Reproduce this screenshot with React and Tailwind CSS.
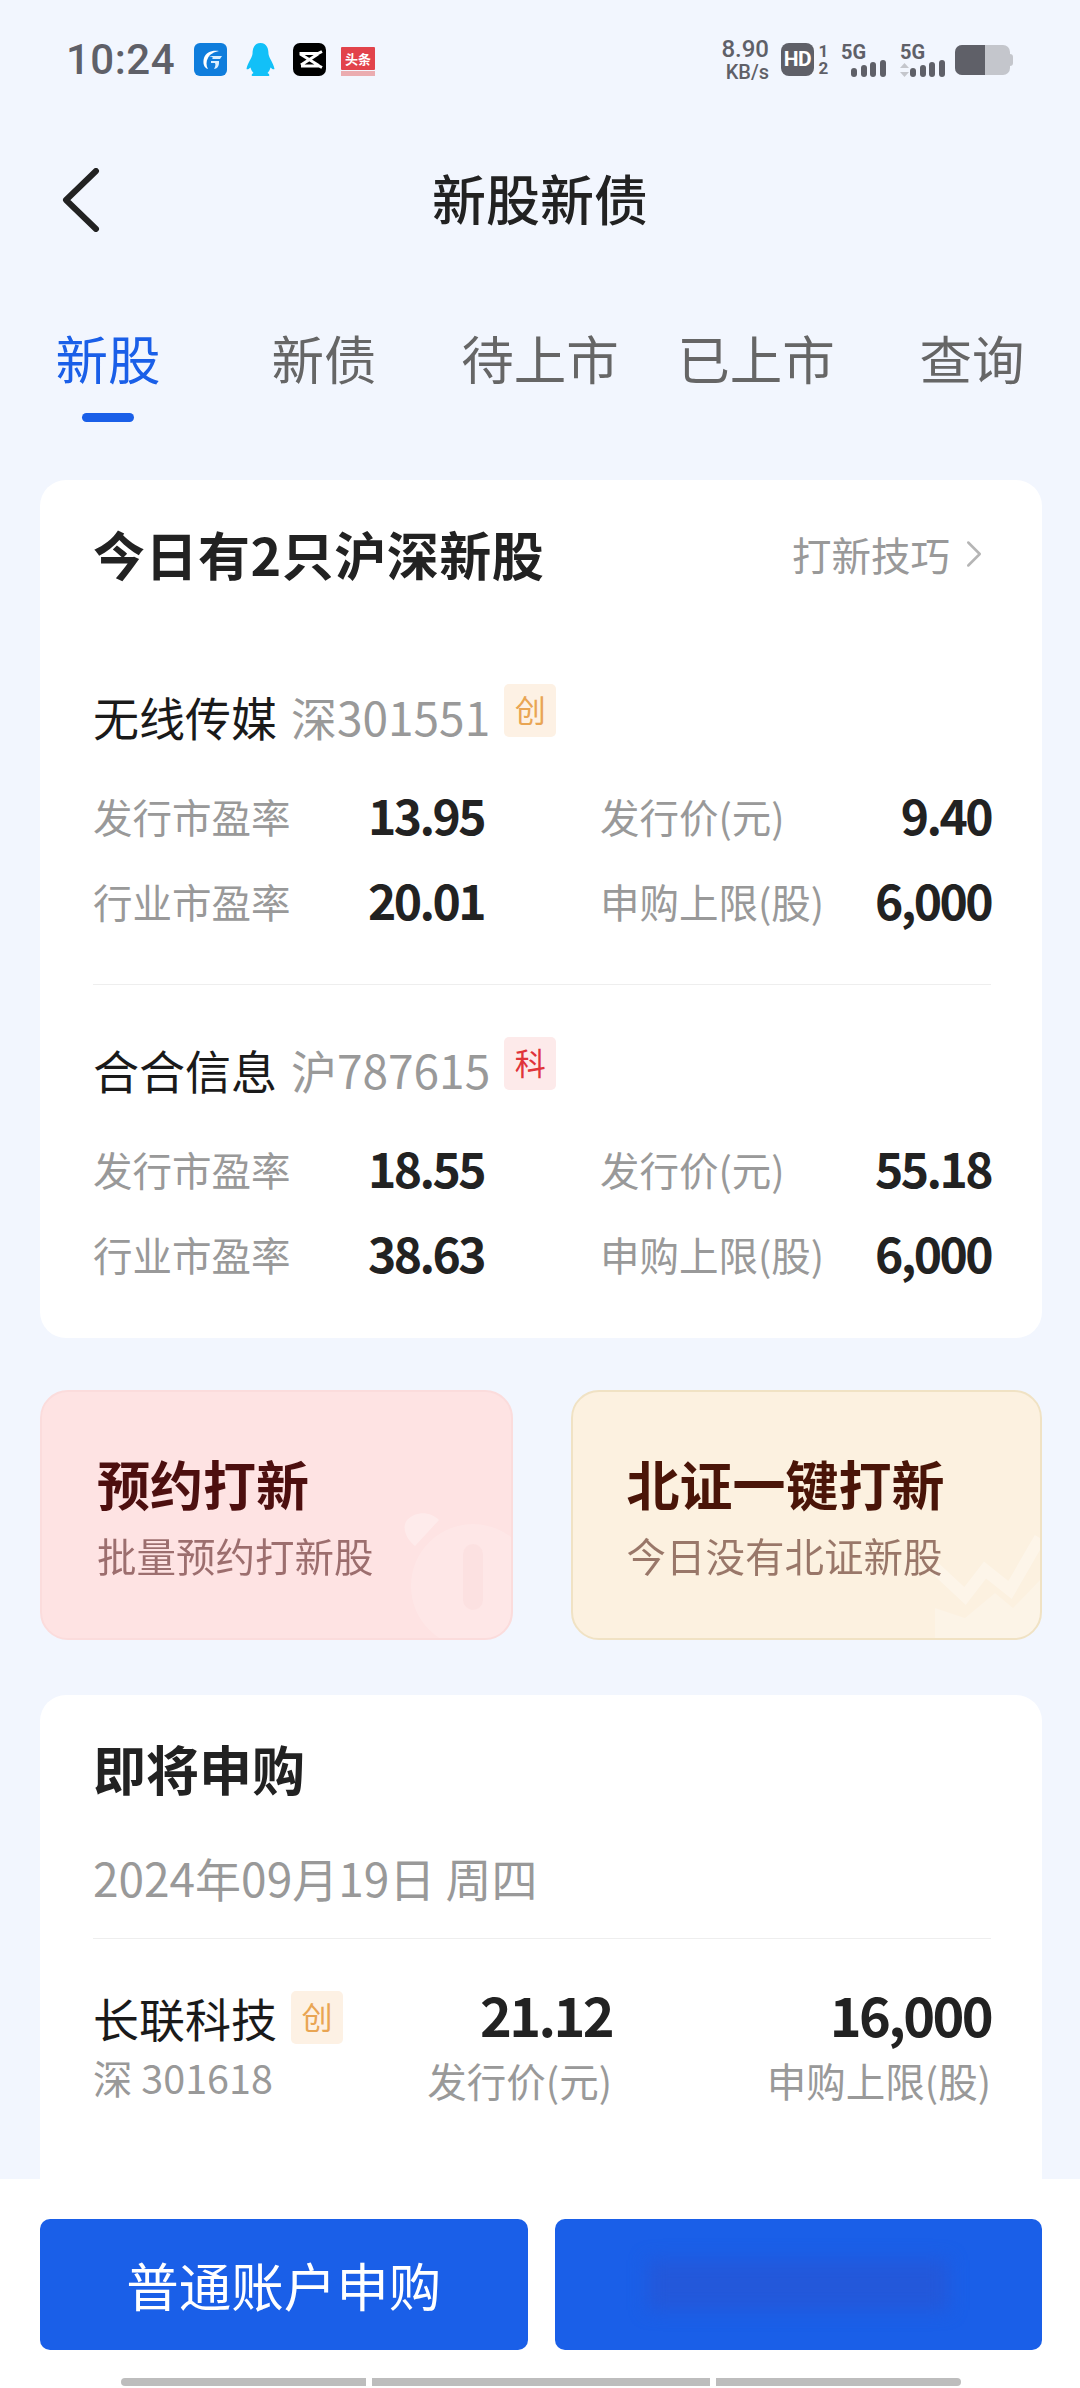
import { ChevronRight } from 'lucide-react';

const SignalBars = () => (
  <svg width="35" height="17" viewBox="0 0 35 17" fill="#5f6068">
    <rect x="0" y="8" width="6" height="9" rx="3" />
    <rect x="10" y="5" width="6" height="12" rx="3" />
    <rect x="19" y="2" width="6" height="15" rx="3" />
    <rect x="29" y="0" width="6" height="17" rx="3" />
  </svg>
);

function NetworkIcon({ arrows }) {
  return (
    <div className="relative w-[45px] h-[34px]">
      <span className="absolute left-0 top-[-2px] font-['Roboto',sans-serif] text-[20px] leading-[22px] font-bold text-[#5f6068]">5G</span>
      <div className="absolute right-0 bottom-0 flex">
        <SignalBars />
      </div>
      {arrows && (
        <svg className="absolute left-0 bottom-0" width="9" height="14" viewBox="0 0 9 14" fill="#c4c6cc">
          <path d="M4.5 0 9 5H0z" />
          <path d="M4.5 14 0 9h9z" />
        </svg>
      )}
    </div>
  );
}

function StatusBar() {
  return (
    <div className="h-[120px] flex items-center justify-between pl-[66px] pr-[67px] pb-[1px]">
      <div className="flex items-center">
        <span className="font-['Roboto',sans-serif] font-medium text-[42px] leading-[48px] text-[#5f6068] w-[128px] tracking-[0.5px]">10:24</span>
        <div className="flex items-center">
          <svg width="33" height="33" viewBox="0 0 33 33">
            <rect width="33" height="33" rx="6" fill="#0f7ddc" />
            <path d="M25 8c-7-1-13 1-15 7-1.500 5 0 10 4 11-2-3-2-8 0-11 2-4 6-6 11-7z" fill="#fff" />
            <path d="M15 13h13l-2 3h-8c1-1 2-2-3-3zM17 18h8v2c0 3-2 6-5 6 1-2 2-4 1-6h-4z" fill="#d9efff" />
          </svg>
          <svg className="ml-[19px]" width="29" height="33" viewBox="0 0 29 33" fill="#12c0f8">
            <path d="M14.500 0C8 0 6.500 6 6.500 11 6 15 1.500 20 .5 26c1 1 3-.5 4-1.500.5 2 1.500 4 3 5.500-2 1-2.500 3-1 3h16c1.500 0 1-2-1-3 1.500-1.500 2.500-3.500 3-5.500 1 1 3 2.500 4 1.500-1-6-5.500-11-6-15C22.500 6 21 0 14.500 0z" />
          </svg>
          <svg className="ml-[18px]" width="33" height="33" viewBox="0 0 33 33">
            <rect width="33" height="33" rx="7" fill="#000" />
            <path d="M29 8.500 25 10.500H8V11.500L25 22V23H8M29 24.500 25 22.500M25 11 8 22" fill="none" stroke="#fff" strokeWidth="3" />
          </svg>
          <div className="ml-[15px] w-[34px] h-[33px] flex flex-col items-center">
            <div className="w-full h-[23px] mt-[4px] bg-[#e2434b] rounded-[1px] text-[13px] leading-[23px] text-white text-center font-bold">头条</div>
            <div className="w-full h-[5px] mt-[1px] bg-[#e88d8f] opacity-70" />
          </div>
        </div>
      </div>
      <div className="flex items-center">
        <div className="flex flex-col items-end w-[54px] font-['Roboto',sans-serif] font-medium text-[#5f6068]">
          <span className="text-[24px] leading-[26px]">8.90</span>
          <span className="text-[20px] leading-[21px]">KB/s</span>
        </div>
        <div className="ml-[12px] w-[33px] h-[33px] rounded-[8px] bg-[#5f6068] text-white font-bold font-['Roboto',sans-serif] text-[21px] leading-[33px] text-center tracking-[-0.5px]">HD</div>
        <div className="ml-[3px] w-[13px] flex flex-col items-center font-['Roboto',sans-serif] font-bold text-[#5f6068] text-[17px] leading-[17px]">
          <span>1</span>
          <span>2</span>
        </div>
        <div className="ml-[11px]"><NetworkIcon /></div>
        <div className="ml-[14px]"><NetworkIcon arrows /></div>
        <div className="ml-[10px] flex items-center">
          <div className="w-[55px] h-[30px] rounded-[7px] overflow-hidden bg-[#c4c6cc] flex">
            <div className="w-[30px] bg-[#5f6068]" />
          </div>
          <div className="w-[3px] h-[12px] bg-[#c4c6cc] rounded-r-[3px]" />
        </div>
      </div>
    </div>
  );
}

function Badge({ children, red }) {
  return (
    <span className={`w-[52px] h-[53px] rounded-[5px] flex items-center justify-center pb-[4px] text-[31px] leading-none ${red ? 'bg-[#fdeaea] text-[#e0343a]' : 'bg-[#fdf1e4] text-[#e9a553]'}`}>
      {children}
    </span>
  );
}

function Stat({ label, value }) {
  return (
    <div className="flex items-center justify-between h-[56px]">
      <span className="text-[39.500px] text-[#999999]">{label}</span>
      <span className="mb-[4px] text-[48px] font-bold text-[#222222] tracking-[-2.600px]">{value}</span>
    </div>
  );
}

function Stock({ name, code, board, red, rows }) {
  return (
    <div>
      <div className="flex items-start h-[60px]">
        <span className="text-[46px] leading-[60px] text-[#1a1a1a]">{name}</span>
        <span className="ml-[14px] text-[46px] leading-[60px] text-[#999999]">{code}</span>
        <span className="ml-[14px] mt-[-2px]"><Badge red={red}>{board}</Badge></span>
      </div>
      <div className="mt-[42px] grid grid-cols-2 gap-x-[116px] gap-y-[29px]">
        {rows.map(([label, value]) => (
          <Stat key={label} label={label} value={value} />
        ))}
      </div>
    </div>
  );
}

function ActionCard({ title, sub, theme, children }) {
  return (
    <div className={`relative overflow-hidden flex-1 h-[250px] rounded-[28px] border-2 pt-[58px] ${theme}`}>
      {children}
      <div className="relative text-[53px] leading-[66px] font-bold">{title}</div>
      <div className="relative mt-[12px] text-[39.500px] leading-[54px] opacity-55">{sub}</div>
    </div>
  );
}

export default function App() {
  return (
    <div className="w-[1080px] h-[2388px] overflow-hidden flex flex-col bg-[#f2f6fe] font-['Noto_Sans_CJK_SC',sans-serif]">
      <StatusBar />

      <div className="relative h-[160px] flex items-center justify-center pb-[6px]">
        <svg className="absolute left-[61px] top-[48px]" width="40" height="64" viewBox="0 0 40 64" fill="none" stroke="#222222" strokeWidth="6" strokeLinecap="round" strokeLinejoin="round">
          <path d="M35 3 5 32l30 29" />
        </svg>
        <h1 className="text-[54px] font-medium text-[#222222]">新股新债</h1>
      </div>

      {/* tabs */}
      <div className="grid grid-cols-5 h-[200px]">
        {['新股', '新债', '待上市', '已上市', '查询'].map((tab, i) => (
          <div key={tab} className="relative h-[142px] pt-[39px] text-center">
            <span className={`text-[52.500px] leading-[76px] ${i === 0 ? 'text-[#1a5fe8]' : 'text-[#666666]'}`}>{tab}</span>
            {i === 0 && <div className="absolute left-[82px] top-[133px] w-[52px] h-[9px] rounded-full bg-[#1a5fe8]" />}
          </div>
        ))}
      </div>

      <div className="flex-1 min-h-0 overflow-hidden pl-[40px] pr-[38px]">
        <div className="bg-white rounded-[26px] pt-[38px] pb-[56px] pl-[53px] pr-[51px]">
          <div className="flex items-center justify-between h-[72px]">
            <span className="text-[52px] font-bold text-[#222222] tracking-[0.5px]">今日有2只沪深新股</span>
            <span className="flex items-center text-[39.500px] text-[#999999] -mr-[6px]">
              打新技巧
              <ChevronRight className="ml-[1px]" size={46} strokeWidth={1.300} color="#b5b5b5" />
            </span>
          </div>
          <div className="mt-[96px]">
            <Stock
              name="无线传媒"
              code="深301551"
              board="创"
              rows={[['发行市盈率', '13.95'], ['发行价(元)', '9.40'], ['行业市盈率', '20.01'], ['申购上限(股)', '6,000']]}
            />
          </div>
          <div className="h-[1px] bg-[#eeeeee] mt-[55px] mb-[54px]" />
          <Stock
            name="合合信息"
            code="沪787615"
            board="科"
            red
            rows={[['发行市盈率', '18.55'], ['发行价(元)', '55.18'], ['行业市盈率', '38.63'], ['申购上限(股)', '6,000']]}
          />
        </div>

        <div className="mt-[52px] flex gap-[58px]">
          <ActionCard title="预约打新" sub="批量预约打新股" theme="pl-[55px] bg-[#fee3e3] border-[#fbdcdc] text-[#4d0f0f]">
            <svg className="absolute right-0 bottom-0" width="110" height="130" viewBox="0 0 110 130">
              <path d="M6 12c10-10 24-8 32 0L14 38C6 32 0 20 6 12z" fill="#fff" opacity="0.3" />
              <circle cx="72" cy="78" r="62" fill="#fff" opacity="0.16" />
              <rect x="62" y="36" width="20" height="66" rx="10" fill="#f9d3d3" opacity="0.3" />
            </svg>
          </ActionCard>
          <ActionCard title="北证一键打新" sub="今日没有北证新股" theme="pl-[54px] bg-[#fcf1e0] border-[#f0e2c4] text-[#4a1508]">
            <svg className="absolute right-0 bottom-0" width="105" height="130" viewBox="0 0 105 130">
              <path d="M0 60 30 88 50 62 75 82 105 30" fill="none" stroke="#fff" strokeWidth="12" opacity="0.3" />
              <path d="M0 100 30 110 60 85 78 100 105 72V130H0z" fill="#fff" opacity="0.22" />
            </svg>
          </ActionCard>
        </div>

        <div className="mt-[55px] bg-white rounded-[26px] pt-[37px] pl-[53px] pr-[51px] h-[600px]">
          <div className="text-[53px] leading-[72px] font-bold text-[#222222]">即将申购</div>
          <div className="mt-[41px] text-[46px] leading-[64px] text-[#999999]">2024年09月19日 周四</div>
          <div className="mt-[29px] h-[1px] bg-[#eeeeee]" />
          <div className="mt-[45px] flex">
            <div className="w-[380px] pt-[3px]">
              <div className="flex items-start h-[60px]">
                <span className="text-[46px] leading-[60px] text-[#1a1a1a]">长联科技</span>
                <span className="ml-[14px] mt-[4px]"><Badge>创</Badge></span>
              </div>
              <div className="mt-[2px] text-[39.500px] leading-[56px] text-[#999999]">深 301618</div>
            </div>
            <div className="w-[139px] flex flex-col items-end shrink-0 whitespace-nowrap">
              <div className="text-[54px] leading-[60px] font-bold text-[#222222] tracking-[-2.600px]">21.12</div>
              <div className="mt-[8px] text-[39.500px] leading-[56px] text-[#999999]">发行价(元)</div>
            </div>
            <div className="flex-1 flex flex-col items-end">
              <div className="text-[54px] leading-[60px] font-bold text-[#222222] tracking-[-2.600px]">16,000</div>
              <div className="mt-[8px] text-[39.500px] leading-[56px] text-[#999999]">申购上限(股)</div>
            </div>
          </div>
        </div>
      </div>

      {/* bottom action bar */}
      <div className="h-[209px] bg-white pl-[40px] pr-[38px] pt-[40px]">
        <div className="flex gap-[27px]">
          <button className="flex-1 h-[131px] rounded-[10px] bg-[#1a5fe8] text-white text-[52.500px]">普通账户申购</button>
          <div className="flex-1 h-[131px] rounded-[10px] bg-[#1a5fe8] flex items-center justify-center">
            <div className="w-[300px] h-[50px] bg-[#2358da] blur-[9px]" />
          </div>
        </div>
        <div className="mt-[28px] flex gap-[6px] justify-center">
          <div className="w-[245px] h-[8px] bg-[#bdbdbd] rounded-l-full" />
          <div className="w-[338px] h-[8px] bg-[#bdbdbd]" />
          <div className="w-[245px] h-[8px] bg-[#bdbdbd] rounded-r-full" />
        </div>
      </div>
    </div>
  );
}
